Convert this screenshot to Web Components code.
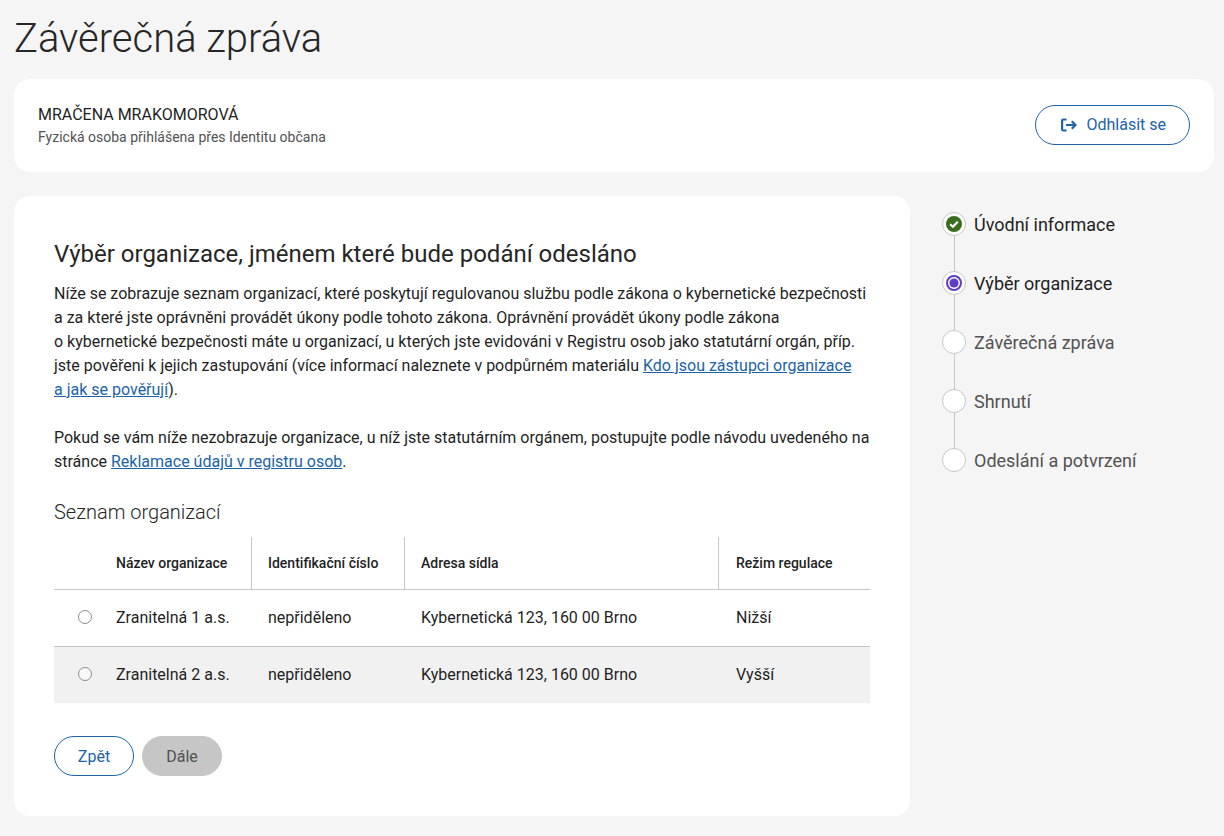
<!DOCTYPE html>
<html lang="cs">
<head>
<meta charset="utf-8">
<title>Závěrečná zpráva</title>
<style>
  html, body { margin: 0; background: #f5f5f5; }
  body { font-family: Roboto, sans-serif; color: #1f1f1f; overflow: hidden; height: 836px; }
</style>
</head>
<body>
<report-page>
  <user-bar slot="user" name="MRAČENA MRAKOMOROVÁ" note="Fyzická osoba přihlášena přes Identitu občana"></user-bar>
  <main-card slot="main">
    <h2 slot="heading">Výběr organizace, jménem které bude podání odesláno</h2>
    <org-table slot="table"></org-table>
  </main-card>
  <step-list slot="steps"></step-list>
</report-page>

<script>
class ReportPage extends HTMLElement {
  constructor() {
    super();
    this.attachShadow({ mode: "open" }).innerHTML = `
      <style>
        :host { display: block; padding: 0 10px 0 14px; }
        h1 { margin: 0; padding-top: 14px; height: 79px; box-sizing: border-box; font-size: 40px; line-height: 50px; font-weight: 300; color: #262626; }
        .cols { display: flex; margin-top: 24px; }
        .left { width: 896px; flex: none; }
        .right { margin-left: 32px; }
      </style>
      <h1>Závěrečná zpráva</h1>
      <slot name="user"></slot>
      <div class="cols">
        <div class="left"><slot name="main"></slot></div>
        <div class="right"><slot name="steps"></slot></div>
      </div>`;
  }
}

class PillButton extends HTMLElement {
  constructor() {
    super();
    this.attachShadow({ mode: "open" }).innerHTML = `
      <style>
        :host { display: inline-flex; align-items: center; justify-content: center; gap: 9px; box-sizing: border-box; height: 40px; padding: 0 23px; border: 1px solid #2063a8; border-radius: 20px; background: #fff; color: #2063a8; font-size: 16px; }
        :host([disabled]) { background: #c6c6c6; border-color: #c6c6c6; color: #525252; }
      </style>
      <slot></slot>`;
  }
}

class UserBar extends HTMLElement {
  constructor() {
    super();
    this.attachShadow({ mode: "open" }).innerHTML = `
      <style>
        :host { display: flex; align-items: center; justify-content: space-between; box-sizing: border-box; height: 93px; padding: 0 24px; background: #fff; border-radius: 16px; }
        .name { font-size: 16px; line-height: 22px; color: #1f1f1f; }
        .note { font-size: 14px; line-height: 20px; color: #525252; margin-top: 1px; }
        pill-button { margin-bottom: 2px; padding: 0 23px 0 25px; }
        svg { display: block; }
      </style>
      <div>
        <div class="name"></div>
        <div class="note"></div>
      </div>
      <pill-button>
        <svg width="16" height="14" viewBox="0 0 16 14" fill="none" stroke="#2063a8" stroke-width="2.2">
          <path d="M5.5 1.5H2.4Q1.1 1.5 1.1 2.8V11.2Q1.1 12.5 2.4 12.5H5.5"/>
          <path d="M5 7H14.5M10.8 3.2L14.5 7L10.8 10.8"/>
        </svg>
        Odhlásit se
      </pill-button>`;
    this.shadowRoot.querySelector(".name").textContent = this.getAttribute("name");
    this.shadowRoot.querySelector(".note").textContent = this.getAttribute("note");
  }
}

class MainCard extends HTMLElement {
  constructor() {
    super();
    this.attachShadow({ mode: "open" }).innerHTML = `
      <style>
        :host { display: block; box-sizing: border-box; height: 620px; padding: 40px; background: #fff; border-radius: 16px; }
        ::slotted(h2) { margin: 0; font-size: 24px; line-height: 36px; font-weight: 400; color: #262626; }
        p { margin: 0 0 24px; font-size: 16px; line-height: 24px; color: #1f1f1f; }
        .intro { margin-top: 10px; }
        a { color: #2063a8; text-decoration: underline; }
        h3 { margin: 0; font-size: 20px; line-height: 28px; font-weight: 300; color: #262626; }
        .actions { display: flex; gap: 8px; margin-top: 33px; }
        pill-button { width: 80px; padding: 0; }
      </style>
      <slot name="heading"></slot>
      <div class="intro">
        <p>Níže se zobrazuje seznam organizací, které poskytují regulovanou službu podle zákona o kybernetické bezpečnosti<br>a za které jste oprávněni provádět úkony podle tohoto zákona. Oprávnění provádět úkony podle zákona<br>o kybernetické bezpečnosti máte u organizací, u kterých jste evidováni v Registru osob jako statutární orgán, příp.<br>jste pověřeni k jejich zastupování (více informací naleznete v podpůrném materiálu <a href="#">Kdo jsou zástupci organizace<br>a jak se pověřují</a>).</p>
        <p>Pokud se vám níže nezobrazuje organizace, u níž jste statutárním orgánem, postupujte podle návodu uvedeného na<br>stránce <a href="#">Reklamace údajů v registru osob</a>.</p>
      </div>
      <h3>Seznam organizací</h3>
      <slot name="table"></slot>
      <div class="actions">
        <pill-button>Zpět</pill-button>
        <pill-button disabled>Dále</pill-button>
      </div>`;
  }
}

class OrgTable extends HTMLElement {
  constructor() {
    super();
    const rows = [
      ["Zranitelná 1 a.s.", "nepřiděleno", "Kybernetická 123, 160 00 Brno", "Nižší"],
      ["Zranitelná 2 a.s.", "nepřiděleno", "Kybernetická 123, 160 00 Brno", "Vyšší"]
    ];
    this.attachShadow({ mode: "open" }).innerHTML = `
      <style>
        :host { display: block; margin-top: 11px; width: 816px; }
        .row { display: grid; grid-template-columns: 46px 151px 153px 314px 1fr; align-items: center; font-size: 16px; color: #1f1f1f; }
        .head { height: 52px; border-bottom: 1px solid #c6c6c6; font-size: 14px; font-weight: 500; color: #1f1f1f; align-items: stretch; }
        .head > div { display: flex; align-items: center; padding-left: 16px; }
        .head > div + div + div { border-left: 1px solid #c6c6c6; }
        .head > div:last-child { padding-left: 17px; }
        .body { height: 54px; padding-bottom: 2px; border-bottom: 1px solid #c6c6c6; }
        .body:last-child { border-bottom: 0; background: #f1f1f1; }
        .body > div { padding-left: 16px; }
        .body > div + div + div { padding-left: 17px; }
        .body > div:last-child { padding-left: 18px; }
        .radio { box-sizing: border-box; width: 14px; height: 14px; margin-left: 24px; padding: 0 !important; border: 1px solid #8d8d8d; border-radius: 50%; background: #fff; }
        .body:last-child .radio { background: #f8f8f8; }
      </style>
      <div class="row head">
        <div></div>
        <div>Název organizace</div>
        <div>Identifikační číslo</div>
        <div>Adresa sídla</div>
        <div>Režim regulace</div>
      </div>
      ${rows.map(r => `
        <div class="row body">
          <div class="radio"></div>
          ${r.map(c => `<div>${c}</div>`).join("")}
        </div>`).join("")}`;
  }
}

class StepList extends HTMLElement {
  constructor() {
    super();
    const steps = [
      ["Úvodní informace", "done"],
      ["Výběr organizace", "current"],
      ["Závěrečná zpráva", ""],
      ["Shrnutí", ""],
      ["Odeslání a potvrzení", ""]
    ];
    const marks = {
      done: `<svg width="16" height="16" viewBox="0 0 16 16"><circle cx="8" cy="8" r="8" fill="#3a6e1f"/><path d="M4.2 8.2L6.9 10.8L11.8 5.8" fill="none" stroke="#fff" stroke-width="2.2"/></svg>`,
      current: `<svg width="16" height="16" viewBox="0 0 16 16"><circle cx="8" cy="8" r="7" fill="none" stroke="#5f3dc4" stroke-width="2"/><circle cx="8" cy="8" r="4.6" fill="#5f3dc4"/></svg>`,
      "": ""
    };
    this.attachShadow({ mode: "open" }).innerHTML = `
      <style>
        :host { display: block; padding-top: 16px; }
        .step { position: relative; display: flex; align-items: center; gap: 8px; height: 24px; margin-bottom: 35px; font-size: 18px; color: #525252; white-space: nowrap; }
        .step.done, .step.current { color: #1f1f1f; }
        .dot { box-sizing: border-box; width: 24px; height: 24px; flex: none; display: flex; align-items: center; justify-content: center; background: #fff; border: 1px solid #c6c6c6; border-radius: 50%; }
        .step:not(:last-child)::after { content: ""; position: absolute; left: 12px; top: 24px; width: 1px; height: 35px; background: #c6c6c6; }
      </style>
      ${steps.map(([label, state]) => `
        <div class="step ${state}"><span class="dot">${marks[state]}</span><span>${label}</span></div>`).join("")}`;
  }
}

customElements.define("pill-button", PillButton);
customElements.define("user-bar", UserBar);
customElements.define("org-table", OrgTable);
customElements.define("main-card", MainCard);
customElements.define("step-list", StepList);
customElements.define("report-page", ReportPage);
</script>
</body>
</html>
